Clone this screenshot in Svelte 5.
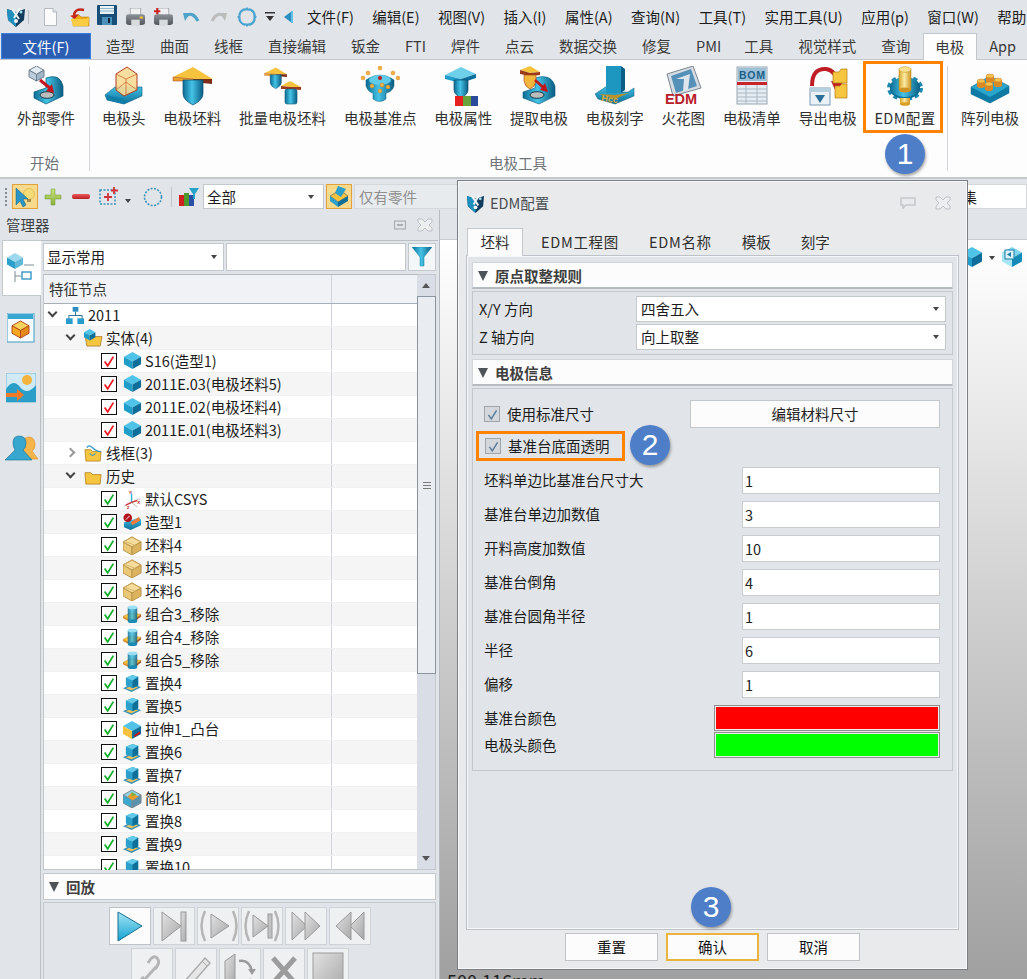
<script>
  const cube = (x, y, s, a, b, c, st = 'none') =>
    `<polygon points="${x},${y + s * 0.28} ${x + s * 0.5},${y} ${x + s},${y + s * 0.28} ${x + s * 0.5},${y + s * 0.56}" fill="${a}" stroke="${st}"/>` +
    `<polygon points="${x},${y + s * 0.28} ${x + s * 0.5},${y + s * 0.56} ${x + s * 0.5},${y + s} ${x},${y + s * 0.72}" fill="${b}" stroke="${st}"/>` +
    `<polygon points="${x + s},${y + s * 0.28} ${x + s * 0.5},${y + s * 0.56} ${x + s * 0.5},${y + s} ${x + s},${y + s * 0.72}" fill="${c}" stroke="${st}"/>`;
  const teal = (x, y, s) => cube(x, y, s, '#4fc3e8', '#1f9cc8', '#0d6f99');
  const shield = (cx, y, w, h) =>
    `<path d="M${cx - w / 2} ${y}H${cx + w / 2}V${y + h * 0.55}Q${cx + w / 2} ${y + h * 0.8} ${cx} ${y + h}Q${cx - w / 2} ${y + h * 0.8} ${cx - w / 2} ${y + h * 0.55}Z" fill="url(#gh)" stroke="#0b4f70" stroke-width=".7"/>`;
  const folder = (o = 0) =>
    `<path d="M${1 + o} 6h6l2 2h9l-1 10H2z" fill="#f6c640" stroke="#b37a16" stroke-width=".8"/>`;
  const check = (c, w = 2) => `<path d="M3 8.500l3.500 5L13 3" fill="none" stroke="${c}" stroke-width="${w}"/>`;
  const topPlate = `<polygon points="1,11 21,1 41,13 21,13" fill="#f6c33f"/><polygon points="1,11 21,13 21,15 1,15" fill="#e9a22c" stroke="#a83a1e" stroke-width=".5"/><polygon points="21,13 41,13 41,18 21,16" fill="#7c2e16"/>`;

  const big = {
    ext: cube(3, 0, 15, '#e4ecf3', '#bccddc', '#a2b6c9', '#6e8091') +
      `<path d="M8 26L20 22V12Q34 7 37 20V30L20 38L8 32Z" fill="url(#gh)" stroke="#0b5a7c" stroke-width=".7"/><ellipse cx="21" cy="29" rx="7" ry="3.300" fill="#bcbcbc" stroke="#1d3b4a"/><path d="M14 14L25 23" stroke="#c3161c" stroke-width="3"/><polygon points="28,27 20,25 26,18" fill="#c3161c"/>`,
    head: `<polygon points="1,29 11,21 38,21 38,30 20,38 3,34" fill="url(#gv)" stroke="#0b5a7c" stroke-width=".6"/><polygon points="3,29 20,33 38,24 20,33 20,38 3,34" fill="#0f7fa8"/><polygon points="12,8 23,1 33,8 33,24 20,30 12,24" fill="#f8dc95" fill-opacity=".9" stroke="#b03c22"/><path d="M12 8L22 13L33 8M22 13V30M12 24L22 16L33 24" fill="none" stroke="#c85a2a" stroke-width=".7"/>`,
    blank: topPlate + shield(21, 14, 20, 25),
    batch: `<g transform="translate(1 1) scale(.56)">${topPlate + shield(21, 14, 20, 25)}</g><g transform="translate(17 14)"><polygon points="1,6 10,1 21,7 10,7" fill="#f6c33f"/><polygon points="1,6 10,7 21,7 21,10 10,9 1,9" fill="#9a3a1a"/><rect x="5" y="9" width="12" height="15" rx="2" fill="url(#gh)" stroke="#0b5a7c" stroke-width=".6"/></g>`,
    datum: `<path d="M6 14Q20 4 34 14V20Q32 26 26 27V33Q20 38 13 33V27Q8 26 6 20Z" fill="url(#gh)" stroke="#0b5a7c" stroke-width=".5"/><ellipse cx="20" cy="14" rx="11" ry="5" fill="#5fcbe8"/>` +
      [[3, 12], [8, 7], [20, 2], [33, 7], [38, 12], [12, 20], [22, 19], [28, 21], [20, 25]].map(([x, y]) => `<circle cx="${x}" cy="${y}" r="2" fill="#f3b23e" stroke="#c97a18" stroke-width=".4"/>`).join('') + `<circle cx="20" cy="12" r="2" fill="#c3161c"/>`,
    attr: `<polygon points="2,9 18,1 33,8 18,13" fill="#6fd0ea"/><polygon points="2,9 18,13 18,17 2,13" fill="#1f9cc8"/><polygon points="18,13 33,8 33,12 18,17" fill="#0d6f99"/>` + shield(18, 14, 14, 18) + `<rect x="12" y="30" width="8" height="10" fill="#e62020"/><rect x="20" y="30" width="8" height="10" fill="#6aa339"/><rect x="28" y="30" width="7" height="10" fill="#2c4a9a"/>`,
    extract: `<path d="M4 26L16 22V12Q32 7 36 20V30L20 38L4 32Z" fill="url(#gh)" stroke="#0b5a7c" stroke-width=".6"/><ellipse cx="18" cy="29" rx="7" ry="3.300" fill="#bcbcbc" stroke="#1d3b4a"/><polygon points="1,4 11,0 21,6 11,7" fill="#f6c33f"/><polygon points="1,4 11,7 21,6 21,9 11,10 1,8" fill="#9a3a1a"/><path d="M5 9H17V15Q16 21 11 23Q6 21 5 15Z" fill="#f2b63c" stroke="#a03c18" stroke-width=".6"/><path d="M16 14L26 23" stroke="#c3161c" stroke-width="2.500"/><polygon points="29,26 21,24 26,17" fill="#c3161c"/>`,
    engrave: `<polygon points="0,28 12,20 12,26 33,26 39,22 39,30 20,38 3,33" fill="url(#gv)" stroke="#0b5a7c" stroke-width=".5"/><rect x="11" y="0" width="15" height="27" fill="#1d96c0"/><polygon points="26,0 30,3 30,24 26,27" fill="#0b5f86"/><polygon points="4,28 20,33 34,27 20,29" fill="#b9922c"/><text x="6" y="35" font-size="9" font-weight="700" fill="#e4a72c" font-family="Liberation Sans" transform="rotate(8 6 35)">Hcc</text>`,
    spark: `<polygon points="4,8 30,0 38,22 10,30" fill="#d6dce2" stroke="#7a8691"/><polygon points="8,10 28,3 34,20 13,27" fill="#5590b8"/><polygon points="13,13 27,8 25,24 20,25 21,13" fill="#dde6ec"/><text x="2" y="38" font-size="14.500" font-weight="700" fill="#b8202a" font-family="Liberation Sans" textLength="32">EDM</text>`,
    bom: `<rect x="5" y="1" width="30" height="37" fill="#e5ecf1" stroke="#9aa8b2"/><rect x="6" y="2" width="28" height="13" fill="#9cc0d8"/><text x="7" y="12.500" font-size="10.500" font-weight="700" fill="#1c5f86" font-family="Liberation Sans" textLength="26">BOM</text><rect x="5" y="16" width="30" height="3" fill="#c8242c"/><path d="M5 23H35M5 27H35M5 31H35M5 35H35M14 19V38M25 19V38" stroke="#a9b8c3" stroke-width="1"/>`,
    export: `<path d="M4 20Q4 2 18 3Q28 4 29 18" fill="none" stroke="#c01c24" stroke-width="4"/><polygon points="23,15 35,16 28,26" fill="#c01c24"/><path d="M25 6h6l2-3h6v14H25z" fill="#f6c640" stroke="#b37a16" stroke-width=".7"/><path d="M27 20h5l2-2h5v14H27z" fill="#f6c640" stroke="#b37a16" stroke-width=".7"/><rect x="2" y="22" width="20" height="17" fill="#eaf1f6" stroke="#7c9ab0"/><rect x="2" y="22" width="20" height="4" fill="#b5cfdf"/><polygon points="7,29 17,29 12,37" fill="#2a6f99"/>`,
    config: `<ellipse cx="20" cy="22" rx="16" ry="11" fill="none" stroke="#1c88b0" stroke-width="4" stroke-dasharray="4.200 3"/><ellipse cx="20" cy="23" rx="15" ry="10" fill="#0f6f98"/><ellipse cx="20" cy="21" rx="15" ry="10" fill="url(#gh)"/><rect x="14" y="3" width="12" height="21" fill="url(#gy)" stroke="#b48a1c" stroke-width=".5"/><ellipse cx="20" cy="3.500" rx="6" ry="2.800" fill="#f8e090" stroke="#b48a1c" stroke-width=".5"/><ellipse cx="20" cy="24" rx="6" ry="2.500" fill="#cf9420"/><rect x="15" y="32" width="10" height="6" fill="url(#gy)"/><ellipse cx="20" cy="38" rx="5" ry="1.800" fill="#d99f22"/>`,
    array: `<polygon points="1,21 20,10 39,20 39,27 20,37 1,28" fill="#2aa5cc" stroke="#0b5a7c" stroke-width=".5"/><polygon points="1,21 20,31 39,20 39,27 20,37 1,28" fill="#0f7ba5"/>` +
      [[11, 18], [20, 13], [28, 17], [19, 21]].map(([x, y]) => `<rect x="${x - 4}" y="${y - 3}" width="8" height="5" fill="#dc8a25"/><ellipse cx="${x}" cy="${y - 3}" rx="4" ry="2" fill="#f7c14d" stroke="#b36a18" stroke-width=".4"/><ellipse cx="${x}" cy="${y + 2}" rx="4" ry="2" fill="#dc8a25"/>`).join('')
  };

  const small = {
    net: `<rect x="7" y="1" width="6" height="5" fill="#2a8fc0"/><path d="M10 6v4M3 14v-4h14v4" fill="none" stroke="#2a6f99"/><rect x="0" y="13" width="7" height="6" fill="#2a9ccb"/><rect x="12" y="13" width="7" height="6" fill="#2a9ccb"/>`,
    solid: `<path d="M1 6h6l2 2h10l-2 10H3z" fill="#f6c640" stroke="#9a6a16" stroke-width=".7"/>` + teal(0, 0, 12),
    cube: teal(1, 0, 18),
    wire: folder() + `<path d="M3 4Q5 0 9 4T18 8M6 10q3 4 6 0" fill="none" stroke="#3498c4" stroke-width="1.300"/>`,
    folder: folder(),
    csys: `<path d="M9 1V13M1 17L9 13L18 9M9 13L15 18" stroke="#c9c9c9" stroke-width="1.200" fill="none"/><path d="M9 4V13" stroke="#31b4d8" stroke-width="1.500"/><path d="M3 16L9 13" stroke="#d23a3a" stroke-width="1.500"/><path d="M9 13L15 11" stroke="#d23a3a" stroke-width="1.500"/><text x="6" y="4" font-size="4.500" fill="#c02020" font-family="Liberation Sans" font-weight="700">Y</text><text x="15" y="15" font-size="4.500" fill="#c02020" font-family="Liberation Sans" font-weight="700">X</text><text x="4" y="20" font-size="4.500" fill="#c02020" font-family="Liberation Sans" font-weight="700">Z</text>`,
    shape: `<polygon points="1,10 17,5 19,7 19,13 8,18 1,15" fill="url(#gv)"/><polygon points="8,10 17,4 18,8 10,13" fill="#f07a3a"/><circle cx="5" cy="5" r="4.500" fill="#b2121a"/><path d="M3 7L7 3" stroke="#fff" stroke-width="1"/>`,
    blank: cube(0, 1, 19, '#f5dc9a', '#e9c877', '#dcb460', '#b8924a') + `<path d="M0 6.300L9.500 1 19 6.300" fill="none" stroke="#caa458"/><path d="M3 6L13 10" stroke="#d8b568"/>`,
    combo: `<polygon points="0,12 8,8 19,10 10,17" fill="#f6c33f" stroke="#c77f20" stroke-width=".5"/><polygon points="0,12 10,17 10,19 0,14" fill="#d98a22"/><polygon points="19,10 10,17 10,19 19,12" fill="#a9511c"/><rect x="5" y="2" width="10" height="15" rx="1" fill="url(#gh)" fill-opacity=".85"/><ellipse cx="10" cy="2.500" rx="5" ry="2" fill="#9be0f2"/><ellipse cx="10" cy="17" rx="5" ry="2" fill="#1c8bb4"/>`,
    swap: `<polygon points="0,15 10,10 19,14 9,19" fill="#3d8fb4"/><polygon points="3,15 10,12 16,14 9,17" fill="#f4c25a"/><polygon points="3,4 10,1 16,3 16,12 10,15 3,12" fill="#2aa0ca"/><polygon points="3,4 10,7 16,3 10,1" fill="#63c9e8"/><polygon points="10,7 16,3 16,12 10,15" fill="#0e6f98"/>`,
    extrude: cube(0, 1, 19, '#4fc3e8', '#f4c23f', '#0d6f99') + `<path d="M12 17l6-4" stroke="#c3161c" stroke-width="2"/>`,
    simp: cube(0, 1, 19, '#8fd1e8', '#3aa9d0', '#5a92ae', '#7d8a90') + `<polygon points="9,4 16,8 10,12 5,8" fill="#e99c2a"/><polygon points="9,3 14,6 9,8" fill="#7fae3a"/>`
  };

  const ui = {
    logo: `<polygon points="1,2 10,5 19,2 18,13 10,20 2,13" fill="#123c5e"/><polygon points="1,2 10,5 10,20 2,13" fill="#1f8fbd"/><path d="M6 2L13 12M14 1L8 11" stroke="#eef3f6" stroke-width="2"/><circle cx="10" cy="14" r="2" fill="#f3f5f7"/><circle cx="15" cy="5" r="1.500" fill="#9fd9ee"/>`,
    file: `<path d="M1.500.5H10L13.500 4V17.500H1.500Z" fill="#fbfbfb" stroke="#b5bac0"/><path d="M10 .5V4H13.500" fill="#e1e3e6" stroke="#b5bac0"/>`,
    open: `<path d="M3 8h6l2 2h8v9H3z" fill="#f3a818" stroke="#b77c10" stroke-width=".6"/><path d="M1 12h15l3-2-1 9H3z" fill="#f9cc44"/><path d="M4 8Q5 1 14 3" fill="none" stroke="#c2241a" stroke-width="2.500"/><polygon points="0,8 9,8 4,12" fill="#c2241a" transform="rotate(-10 4 8)"/>`,
    save: `<rect x="0" y="0" width="20" height="20" rx="1" fill="#174f78"/><rect x="3" y="1" width="14" height="8" fill="#e9f2f7"/><path d="M3 3.500H17M3 6H17" stroke="#8fb6cc"/><rect x="5" y="12" width="10" height="8" fill="#4b90b8"/><rect x="11" y="13" width="2" height="5" fill="#123"/>`,
    print: `<rect x="4" y="0" width="10" height="7" fill="#eef0f2" stroke="#8a8f95" stroke-width=".6"/><path d="M0 8Q0 6 3 6H15Q18 6 18 8V14Q18 16 15 16H3Q0 16 0 14Z" fill="url(#gp)"/><rect x="5" y="11" width="8" height="6" fill="#d8dbde"/><rect x="13" y="8" width="3" height="2" fill="#f3c23a"/>`,
    print2: `<rect x="4" y="0" width="10" height="7" fill="#eef0f2" stroke="#8a8f95" stroke-width=".6"/><path d="M0 8Q0 6 3 6H15Q18 6 18 8V14Q18 16 15 16H3Q0 16 0 14Z" fill="url(#gp)"/><rect x="5" y="11" width="8" height="6" fill="#d8dbde"/><path d="M3 0V6M0 3H6" stroke="#d02020" stroke-width="1.800"/>`,
    undo: `<path d="M3 5Q10 0 15 10" fill="none" stroke="#4ca2c8" stroke-width="3"/><polygon points="0,2 7,2 2,10" fill="#4ca2c8"/>`,
    redo: `<path d="M13 5Q6 0 1 10" fill="none" stroke="#bcbcbc" stroke-width="3"/><polygon points="16,2 9,2 14,10" fill="#bcbcbc"/>`,
    spin: `<circle cx="10" cy="10" r="8" fill="none" stroke="#4aa4cf" stroke-width="2.200" stroke-dasharray="9.500 3.070" stroke-dashoffset="-1.500"/><polygon points="10,0 7,3.500 13,3.500" fill="#4aa4cf"/><polygon points="10,20 7,16.500 13,16.500" fill="#4aa4cf"/><polygon points="0,10 3.500,7 3.500,13" fill="#4aa4cf"/><polygon points="20,10 16.500,7 16.500,13" fill="#4aa4cf"/>`,
    caret: `<path d="M0 0H10V1.500H0Z" fill="#333"/><polygon points="1,4 9,4 5,9" fill="#333"/>`,
    back: `<polygon points="8,0 8,12 0,6" fill="#2b8fc2"/><rect x="7" y="0" width="2" height="12" fill="#62c0e6"/>`,
    select: `<circle cx="16" cy="9" r="5.500" fill="#f6dc76" stroke="#d9a93a" stroke-width=".6"/><rect x="14" y="14" width="4" height="3" fill="#a58c4c"/><polygon points="3,3 3,20 7,16 10,22 13,20 10,14 15,14" fill="#2a95c4" stroke="#125f84" stroke-width=".5"/>`,
    plus: `<path d="M7 1H11V7H17V11H11V17H7V11H1V7H7Z" fill="url(#gl)" stroke="#6e9a30" stroke-width=".5"/>`,
    minus: `<rect x="0" y="6" width="18" height="5" rx="2" fill="url(#gm)"/>`,
    boxplus: `<rect x="1" y="3" width="15" height="14" fill="none" stroke="#3d92bb" stroke-width="1.500" stroke-dasharray="2 1.500"/><path d="M9 6V14M5 10H13" stroke="#d0343a" stroke-width="1.800"/><path d="M15 0V7M12 3.500H19" stroke="#d0343a" stroke-width="1.800"/>`,
    circ: `<circle cx="10" cy="10" r="8.500" fill="none" stroke="#3d92bb" stroke-width="1.600" stroke-dasharray="2 1.400"/>`,
    chart: `<rect x="0" y="8" width="5" height="11" fill="#d02020"/><rect x="5" y="6" width="5" height="13" fill="#4d9a2c"/><rect x="10" y="8" width="5" height="11" fill="#2a4fa8"/><polygon points="10,1 20,1 16,7 16,12 14,12 14,7" fill="#27a2c9"/>`,
    cuber: `<polygon points="3,11 13,5 21,11 11,17" fill="#f4c23f" stroke="#555" stroke-width=".6"/><polygon points="3,11 11,17 11,22 3,16" fill="#2aa0ca"/><polygon points="21,11 11,17 11,22 21,16" fill="#0e6f98"/><polygon points="11,1 19,4 14,12 8,8" fill="#2aa0ca"/>`,
    tree: cube(0, 0, 16, '#9fd9ee', '#2aa0ca', '#62b8d8') + `<path d="M17 12H27M8 18V29M8 23H14" stroke="#7c8b96" stroke-width="1" fill="none"/><rect x="15" y="19" width="9" height="7" fill="#fff" stroke="#2a8fbd" stroke-width="1.300"/>`,
    part: `<rect x="0" y="0" width="27" height="29" fill="#f8fbfd" stroke="#3d9cc4"/><rect x="1" y="1" width="25" height="5" fill="#39a6cf"/>` + cube(5, 8, 17, '#fad35c', '#f6a821', '#e68a1a', '#b84c1c'),
    pic: `<rect x="0" y="0" width="30" height="29" fill="#cfeaf5" stroke="#72b6d1"/><path d="M0 16Q7 5 14 14T30 12V29H0Z" fill="#2a9ec8"/><circle cx="21" cy="7" r="5" fill="#f4b23e"/><path d="M0 20H11V16L18 22L11 28V24H0Z" fill="#f1792a"/>`,
    person: `<path d="M18 9Q18 2 24 2Q30 2 30 10Q30 14 27 16L33 24H18Z" fill="#f5b54a" stroke="#d88a20" stroke-width=".6"/><path d="M8 8Q8 1 14 1Q21 1 21 8Q21 13 18 15L27 25H0L10 15Q8 12 8 8Z" fill="#37a7cf" stroke="#116f98" stroke-width=".6"/>`,
    funnel: `<polygon points="0,0 20,0 12,10 12,19 8,19 8,10" fill="url(#gh)" stroke="#1589ae" stroke-width=".5"/>`,
    pin: `<path d="M1 1H15V8H6L3 11V8H1Z" fill="none" stroke="#c5c9cc" stroke-width="1.600"/>`,
    close: `<path d="M1 1H5L8 4L11 1H15V4L12 7L15 10V13H11L8 10L5 13H1V10L4 7L1 4Z" fill="#eceef0" stroke="#bcc1c6" stroke-width="1"/>`,
    mini: `<rect x="0.500" y="2" width="11" height="8" fill="none" stroke="#a9aeb3" stroke-width="1.200"/><rect x="3" y="5" width="6" height="2" fill="#a9aeb3"/>`
  };

  const play = {
    play: `<polygon points="9,7 9,36 33,21" fill="url(#gv2)" stroke="#1c6f90" stroke-width="1"/>`,
    step: `<polygon points="9,7 9,36 28,21" fill="url(#gg)" stroke="#999"/><rect x="28" y="7" width="5" height="29" fill="url(#gg)" stroke="#999"/>`,
    pp: `<polygon points="14,9 14,33 32,21" fill="url(#gg)" stroke="#999"/><path d="M8 6Q1 21 8 36M36 6Q43 21 36 36" fill="none" stroke="#b5b5b5" stroke-width="2.500"/>`,
    ps: `<polygon points="12,10 12,32 27,21" fill="url(#gg)" stroke="#999"/><rect x="27" y="9" width="4" height="24" fill="#c2c2c2" stroke="#999"/><path d="M8 6Q1 21 8 36M34 6Q41 21 34 36" fill="none" stroke="#b5b5b5" stroke-width="2.500"/>`,
    ff: `<polygon points="7,7 7,35 22,21" fill="url(#gg)" stroke="#999"/><polygon points="20,7 20,35 35,21" fill="url(#gg)" stroke="#999"/>`,
    rw: `<polygon points="35,7 35,35 21,21" fill="url(#gg)" stroke="#999"/><polygon points="22,7 22,35 7,21" fill="url(#gg)" stroke="#999"/>`,
    link: `<path d="M13 28Q6 34 11 38T21 33M24 20Q30 13 26 9T17 14" fill="none" stroke="#b5b5b5" stroke-width="3"/><path d="M14 30L25 18" stroke="#b5b5b5" stroke-width="3"/>`,
    pen: `<path d="M9 33L30 9L35 14L14 38L8 40Z" fill="#e6e6e6" stroke="#aaa" stroke-width="1.400"/><path d="M27 12L32 17" stroke="#aaa"/>`,
    flip: `<polygon points="6,12 16,5 16,34 6,38" fill="url(#gg)" stroke="#999"/><polygon points="16,34 32,30 38,38 22,42" fill="#e6e6e6" stroke="#999"/><path d="M20 12Q30 10 33 22" fill="none" stroke="#9a9a9a" stroke-width="2.500"/><polygon points="29,20 37,20 33,26" fill="#9a9a9a"/>`,
    del: `<path d="M10 9L32 34M32 9L10 34" stroke="#9c9c9c" stroke-width="5"/>`,
    stop: `<rect x="6" y="4" width="30" height="38" fill="url(#gg)" stroke="#9c9c9c"/>`
  };

  const menus = ['文件(F)', '编辑(E)', '视图(V)', '插入(I)', '属性(A)', '查询(N)', '工具(T)', '实用工具(U)', '应用(p)', '窗口(W)', '帮助'];
  const tabs = ['造型', '曲面', '线框', '直接编辑', '钣金', 'FTI', '焊件', '点云', '数据交换', '修复', 'PMI', '工具', '视觉样式', '查询', '电极', 'App'];
  const ribbon = [
    ['head', '电极头'], ['blank', '电极坯料'], ['batch', '批量电极坯料'], ['datum', '电极基准点'], ['attr', '电极属性'],
    ['extract', '提取电极'], ['engrave', '电极刻字'], ['spark', '火花图'], ['bom', '电极清单'], ['export', '导出电极']
  ];
  const h = { mark: 'green' };
  const tree = [
    { lv: 0, arrow: 'd', ic: 'net', t: '2011' },
    { lv: 1, arrow: 'd', ic: 'solid', t: '实体(4)' },
    { lv: 2, mark: 'red', ic: 'cube', t: 'S16(造型1)' },
    { lv: 2, mark: 'red', ic: 'cube', t: '2011E.03(电极坯料5)' },
    { lv: 2, mark: 'red', ic: 'cube', t: '2011E.02(电极坯料4)' },
    { lv: 2, mark: 'red', ic: 'cube', t: '2011E.01(电极坯料3)' },
    { lv: 1, arrow: 'r', ic: 'wire', t: '线框(3)' },
    { lv: 1, arrow: 'd', ic: 'folder', t: '历史' },
    { lv: 2, ...h, ic: 'csys', t: '默认CSYS' },
    { lv: 2, ...h, ic: 'shape', t: '造型1' },
    { lv: 2, ...h, ic: 'blank', t: '坯料4' },
    { lv: 2, ...h, ic: 'blank', t: '坯料5' },
    { lv: 2, ...h, ic: 'blank', t: '坯料6' },
    { lv: 2, ...h, ic: 'combo', t: '组合3_移除' },
    { lv: 2, ...h, ic: 'combo', t: '组合4_移除' },
    { lv: 2, ...h, ic: 'combo', t: '组合5_移除' },
    { lv: 2, ...h, ic: 'swap', t: '置换4' },
    { lv: 2, ...h, ic: 'swap', t: '置换5' },
    { lv: 2, ...h, ic: 'extrude', t: '拉伸1_凸台' },
    { lv: 2, ...h, ic: 'swap', t: '置换6' },
    { lv: 2, ...h, ic: 'swap', t: '置换7' },
    { lv: 2, ...h, ic: 'simp', t: '简化1' },
    { lv: 2, ...h, ic: 'swap', t: '置换8' },
    { lv: 2, ...h, ic: 'swap', t: '置换9' },
    { lv: 2, ...h, ic: 'swap', t: '置换10' }
  ];
  const sizes = [['坯料单边比基准台尺寸大', '1'], ['基准台单边加数值', '3'], ['开料高度加数值', '10'], ['基准台倒角', '4'], ['基准台圆角半径', '1'], ['半径', '6'], ['偏移', '1']];
  const dtabs = ['坯料', 'EDM工程图', 'EDM名称', '模板', '刻字'];
</script>

{#snippet svg(body, w, hh, vw, vh)}
  <svg width={w} height={hh} viewBox="0 0 {vw} {vh}" class="ico">{@html body}</svg>
{/snippet}

{#snippet drop()}
  <span class="drop"></span>
{/snippet}

{#snippet tri()}
  <span class="tri"></span>
{/snippet}

<div class="app">
  <svg class="defs" width="0" height="0" aria-hidden="true">
    <defs>
      <linearGradient id="gh" x1="0" x2="1" y1="0" y2="0"><stop offset="0" stop-color="#0c6b94"/><stop offset=".45" stop-color="#45c3e6"/><stop offset="1" stop-color="#0a5c82"/></linearGradient>
      <linearGradient id="gv" x1="0" x2="0" y1="0" y2="1"><stop offset="0" stop-color="#42bfe4"/><stop offset="1" stop-color="#0c6f99"/></linearGradient>
      <linearGradient id="gv2" x1="0" x2="0" y1="0" y2="1"><stop offset="0" stop-color="#a4e6f6"/><stop offset="1" stop-color="#15a2d2"/></linearGradient>
      <linearGradient id="gy" x1="0" x2="1" y1="0" y2="0"><stop offset="0" stop-color="#d9a425"/><stop offset=".45" stop-color="#fbeaa5"/><stop offset="1" stop-color="#cf9420"/></linearGradient>
      <linearGradient id="gp" x1="0" x2="0" y1="0" y2="1"><stop offset="0" stop-color="#8b9197"/><stop offset="1" stop-color="#52585e"/></linearGradient>
      <linearGradient id="gl" x1="0" x2="0" y1="0" y2="1"><stop offset="0" stop-color="#c6e078"/><stop offset="1" stop-color="#8db23e"/></linearGradient>
      <linearGradient id="gm" x1="0" x2="0" y1="0" y2="1"><stop offset="0" stop-color="#ee5a5a"/><stop offset="1" stop-color="#b81f24"/></linearGradient>
      <linearGradient id="gg" x1="0" x2="1" y1="0" y2="1"><stop offset="0" stop-color="#e2e2e2"/><stop offset="1" stop-color="#a8a8a8"/></linearGradient>
    </defs>
  </svg>

  <header class="qat">
    <div class="qat-icons">
      <span class="q logo">{@render svg(ui.logo, 20, 20, 20, 20)}</span>
      <span class="q qsep"></span>
      <span class="q new">{@render svg(ui.file, 15, 18, 15, 18)}</span>
      <span class="q open">{@render svg(ui.open, 20, 20, 20, 20)}</span>
      <span class="q save">{@render svg(ui.save, 20, 20, 20, 20)}</span>
      <span class="q prn">{@render svg(ui.print, 19, 18, 18, 17)}</span>
      <span class="q prn2">{@render svg(ui.print2, 19, 18, 18, 17)}</span>
      <span class="q und">{@render svg(ui.undo, 17, 12, 17, 12)}</span>
      <span class="q red">{@render svg(ui.redo, 17, 12, 17, 12)}</span>
      <span class="q spin">{@render svg(ui.spin, 20, 20, 20, 20)}</span>
      <span class="q car">{@render svg(ui.caret, 10, 9, 10, 9)}</span>
      <span class="q bak">{@render svg(ui.back, 9, 12, 9, 12)}</span>
    </div>
    <nav class="menu">
      {#each menus as m}<span>{m}</span>{/each}
    </nav>
  </header>

  <div class="tabs">
    <span class="filetab">文件(F)</span>
    {#each tabs as t}
      <span class="tab" class:active={t === '电极'} class:tight={t === 'PMI'}>{t}</span>
    {/each}
  </div>

  <section class="ribbon">
    <div class="group g1">
      <div class="items">
        <div class="item">{@render svg(big.ext, 40, 40, 40, 40)}<span>外部零件</span></div>
      </div>
      <div class="gname">开始</div>
    </div>
    <div class="group g2">
      <div class="items">
        {#each ribbon as [ic, label]}
          <div class="item">{@render svg(big[ic], 40, 40, 40, 40)}<span>{label}</span></div>
        {/each}
        <div class="item edm">{@render svg(big.config, 40, 40, 40, 40)}<span>EDM配置</span></div>
      </div>
      <div class="gname">电极工具</div>
    </div>
    <div class="group g3">
      <div class="items">
        <div class="item">{@render svg(big.array, 40, 40, 40, 40)}<span>阵列电极</span></div>
      </div>
    </div>
  </section>

  <div class="toolbar">
    <span class="grip"></span>
    <span class="tbtn on">{@render svg(ui.select, 24, 24, 24, 24)}</span>
    <span class="tic plus">{@render svg(ui.plus, 18, 18, 18, 18)}</span>
    <span class="tic minus">{@render svg(ui.minus, 18, 18, 18, 18)}</span>
    <span class="tic bplus">{@render svg(ui.boxplus, 20, 20, 20, 20)}</span>
    <span class="tcar">{@render drop()}</span>
    <span class="tic circ">{@render svg(ui.circ, 20, 20, 20, 20)}</span>
    <span class="tsep"></span>
    <span class="tic">{@render svg(ui.chart, 20, 20, 20, 20)}</span>
    <div class="combo all"><span>全部</span>{@render drop()}</div>
    <span class="tbtn on cube">{@render svg(ui.cuber, 24, 24, 24, 24)}</span>
    <div class="tinput">仅有零件</div>
    <div class="tinput2">选择集</div>
  </div>

  <div class="main">
    <aside class="manager">
      <div class="mhead">
        <span class="mtitle">管理器</span>
        <span class="mbtn">{@render svg(ui.mini, 12, 12, 12, 12)}</span>
        <span class="mbtn">{@render svg(ui.close, 16, 14, 16, 14)}</span>
      </div>
      <div class="mbody">
        <div class="strip">
          <div class="stab sel">{@render svg(ui.tree, 28, 30, 28, 30)}</div>
          <div class="stab s2">{@render svg(ui.part, 28, 30, 28, 30)}</div>
          <div class="stab s3">{@render svg(ui.pic, 30, 30, 30, 30)}</div>
          <div class="stab s4">{@render svg(ui.person, 33, 26, 33, 26)}</div>
        </div>
        <div class="panel">
          <div class="filter">
            <div class="combo show"><span>显示常用</span>{@render drop()}</div>
            <div class="search"></div>
            <div class="fbtn">{@render svg(ui.funnel, 20, 20, 20, 20)}</div>
          </div>
          <div class="grid">
            <div class="gridmain">
              <div class="ghead"><div class="c1">特征节点</div><div class="c2"></div></div>
              <div class="rows">
                {#each tree as r, i}
                  <div class="row lv{r.lv}" class:odd={i % 2 === 1}>
                    <div class="c1">
                      {#if r.arrow}<span class="arrow {r.arrow}"></span>{/if}
                      {#if r.mark}<span class="mark">{@render svg(check(r.mark === 'red' ? '#ef1c24' : '#12b02a'), 14, 14, 16, 16)}</span>{/if}
                      <span class="ricon">{@render svg(small[r.ic], 19, 19, 20, 20)}</span>
                      <span class="rt">{r.t}</span>
                    </div>
                    <div class="c2"></div>
                  </div>
                {/each}
              </div>
            </div>
            <div class="sbar">
              <span class="sup"></span>
              <div class="thumb"><i></i></div>
              <span class="sdn"></span>
            </div>
          </div>
          <div class="phead">{@render tri()}<b>回放</b></div>
          <div class="pbody">
            <div class="prow">
              {#each ['play', 'step', 'pp', 'ps', 'ff', 'rw'] as p, i}
                <span class="pbtn" class:first={i === 0}>{@render svg(play[p], 42, 42, 42, 42)}</span>
              {/each}
            </div>
            <div class="prow">
              {#each ['link', 'pen', 'flip', 'del', 'stop'] as p}
                <span class="pbtn tall">{@render svg(play[p], 42, 42, 42, 42)}</span>
              {/each}
            </div>
          </div>
        </div>
      </div>
    </aside>

    <div class="view">
      <div class="vtop"></div>
      <div class="canvas">
        <div class="vicons">
          {@render svg(teal(0, 0, 20), 20, 20, 20, 20)}
          <span class="vcar">{@render drop()}</span>
          {@render svg(cube(0, 0, 20, '#7fd4ee', '#a9e4f5', '#148bb8') + '<rect x="3" y="3" width="9" height="9" fill="#dff3fa" stroke="#1c7fa8"/><polygon points="9,5 9,10 5,7.500" fill="#1c7fa8"/>', 20, 20, 20, 20)}
        </div>
        <div class="measure">500.116mm</div>
      </div>
    </div>
  </div>

  <div class="dlg">
    <div class="dtitle">
      {@render svg(ui.logo, 19, 19, 20, 20)}
      <span class="dname">EDM配置</span>
      <span class="dpin">{@render svg(ui.pin, 16, 12, 16, 12)}</span>
      <span class="dx">{@render svg(ui.close, 16, 14, 16, 14)}</span>
    </div>
    <div class="dtabs">
      {#each dtabs as t, i}<span class="dtab" class:sel={i === 0} class:latin={t.startsWith('EDM')}>{t}</span>{/each}
    </div>
    <div class="dpanel">
      <div class="shead">{@render tri()}<b>原点取整规则</b></div>
      <div class="sbody rules">
        <div class="frow"><label>X/Y 方向</label><div class="combo wide"><span>四舍五入</span>{@render drop()}</div></div>
        <div class="frow"><label>Z 轴方向</label><div class="combo wide"><span>向上取整</span>{@render drop()}</div></div>
      </div>
      <div class="shead second">{@render tri()}<b>电极信息</b></div>
      <div class="sbody info">
        <div class="chkrow">
          <div class="chk"><span class="box">{@render svg(check('#5a7a9a', 1.800), 13, 13, 16, 16)}</span><span>使用标准尺寸</span></div>
          <button class="edit">编辑材料尺寸</button>
        </div>
        <div class="chkrow second-chk">
          <div class="chk hl"><span class="box">{@render svg(check('#5a7a9a', 1.800), 13, 13, 16, 16)}</span><span>基准台底面透明</span></div>
          <span class="badge b2">2</span>
        </div>
        {#each sizes as [l, v]}
          <div class="irow"><label>{l}</label><div class="val">{v}</div></div>
        {/each}
        <div class="crow one"><label>基准台颜色</label><div class="swatch r"></div></div>
        <div class="crow"><label>电极头颜色</label><div class="swatch g"></div></div>
      </div>
    </div>
    <div class="dfoot">
      <button>重置</button>
      <button class="primary">确认</button>
      <button>取消</button>
    </div>
  </div>

  <span class="edmbox"></span>
  <span class="badge b1">1</span>
  <span class="badge b3">3</span>
</div>

<style>
  :global(body) { margin: 0; background: #e1e5e9; }
  .app {
    position: relative; width: 1027px; height: 979px; overflow: hidden;
    display: flex; flex-direction: column; background: #e1e5e9; color: #1c1c1c;
    font: 14.5px/20px "Noto Sans CJK SC", "Noto Sans", sans-serif;
  }
  .defs { position: absolute; }
  .ico { display: block; flex: none; }

  .qat { height: 33px; display: flex; flex: none; align-items: center; }
  .qat-icons { width: 307px; flex: none; display: flex; align-items: center; }
  .q { display: block; flex: none; }
  .logo { margin-left: 6px; }
  .qsep { width: 1px; height: 14px; margin-left: 2px; background: #b9bec4; }
  .new { margin-left: 14px; }
  .open { margin-left: 12px; }
  .save { margin-left: 7px; margin-top: -3px; }
  .prn { margin-left: 9px; }
  .prn2 { margin-left: 9px; }
  .und { margin-left: 10px; }
  .red { margin-left: 11px; }
  .spin { margin-left: 9px; }
  .car { margin-left: 8px; }
  .bak { margin-left: 9px; }
  .menu { display: flex; white-space: nowrap; }
  .menu span { margin-right: 18.400px; }

  .tabs { height: 27px; flex: none; display: flex; align-items: stretch; border-bottom: 1px solid #c2c7cc; box-sizing: border-box; }
  .filetab {
    width: 90px; margin-left: 1px; margin-right: 2.500px; flex: none; box-sizing: border-box; text-align: center; line-height: 25px;
    background: #2c5fb3; border: 1px solid #3f7fdc; color: #fff;
  }
  .tab { padding: 0 12.500px; line-height: 26px; color: #3a3a3a; white-space: nowrap; }
  .tab.tight { padding-right: 10.500px; }
  .tab.active { background: #fdfdfd; border: 1px solid #c2c7cc; border-bottom: 0; padding: 0 11.500px; margin-bottom: -1px; position: relative; }

  .ribbon { height: 119px; flex: none; display: flex; background: #fdfdfd; border-bottom: 2px solid #c4c9ce; box-sizing: border-box; }
  .group { position: relative; display: flex; flex-direction: column; box-sizing: border-box; margin: 6px 0; padding-top: 0; }
  .g1 { width: 90px; padding-left: 17px; border-right: 1px solid #d4d7da; }
  .g2 { width: 858px; padding-left: 12px; border-right: 1px solid #d4d7da; }
  .g3 { padding-left: 13px; }
  .items { display: flex; gap: 17.800px; height: 93px; }
  .item { display: flex; flex-direction: column; align-items: center; white-space: nowrap; color: #303030; }
  .item span { margin-top: 2px; }
  .edm span { letter-spacing: .35px; }
  .gname { text-align: center; color: #6f7478; height: 18px; }
  .g1 .gname { margin-left: -17px; }
  .g2 .gname { margin-left: -12px; padding-right: 1px; }

  .toolbar { height: 30px; box-sizing: border-box; padding-top: 3px; flex: none; display: flex; align-items: center; margin-top: 1px; position: relative; }
  .grip { width: 2px; height: 18px; margin: 0 5px; background: repeating-linear-gradient(#7e8a96 0 2px, transparent 2px 4px); }
  .tbtn { width: 26px; height: 25px; box-sizing: border-box; flex: none; display: flex; align-items: center; justify-content: center; }
  .tbtn.on { background: #f9d98b; border: 1px solid #e0a33c; }
  .tbtn.cube { margin-left: 2px; }
  .tic { flex: none; margin-left: 5px; }
  .plus { margin-left: 6px; }
  .minus { margin-left: 10px; }
  .bplus { margin-left: 9px; }
  .tcar { margin-left: 6px; width: 10px; }
  .circ { margin-left: 8px; }
  .tsep { width: 1px; height: 20px; margin-left: 8px; background: #c2c7cc; }
  .tsep + .tic { margin-left: 7px; }
  .drop { display: inline-block; width: 0; height: 0; border: 3.500px solid transparent; border-top: 4.500px solid #444; border-bottom: 0; flex: none; }
  .combo { box-sizing: border-box; display: flex; align-items: center; justify-content: space-between; background: #fff; border: 1px solid #c3c8cd; padding: 0 9px 0 3px; }
  .combo.all { width: 121px; height: 25px; margin-left: 4px; }
  .tinput { width: 105px; height: 25px; box-sizing: border-box; margin-left: 2px; padding-left: 4px; line-height: 23px; background: #e8ebee; border: 1px solid #d6d9dc; color: #8f8f8f; flex: none; }
  .tinput2 { flex: 1; height: 25px; box-sizing: border-box; background: #fff; border: 1px solid #d6d9dc; line-height: 23px; text-align: right; padding-right: 49px; }

  .main { flex: 1; min-height: 0; display: flex; }
  .manager { width: 440px; flex: none; box-sizing: border-box; border-right: 1px solid #b5bbc1; }
  .mhead { height: 30px; display: flex; align-items: center; }
  .mtitle { margin-left: 6px; flex: 1; color: #3d4146; }
  .mbtn { margin-right: 7px; }
  .mbtn + .mbtn { margin-left: 4px; margin-right: 6px; }
  .mbody { display: flex; height: 739px; }
  .strip { width: 38px; margin-left: 2px; flex: none; position: relative; }
  .stab { display: flex; justify-content: center; }
  .stab.sel { height: 56px; box-sizing: border-box; padding-top: 12px; padding-right: 2px; background: #fff; border: 1px solid #c3c8cd; border-right: 0; position: relative; margin-right: -1px; }
  .s2 { margin-top: 17px; } .s3 { margin-top: 30px; } .s4 { margin-top: 32px; }
  .panel { width: 398px; box-sizing: border-box; border-left: 1px solid #b9bfc5; border-top: 1px solid #b9bfc5; padding: 2px 2px 0 2px; }
  .filter { display: flex; gap: 2px; height: 28px; }
  .combo.show { width: 181px; padding: 0 6px 0 3px; }
  .search { width: 180px; background: #fff; border: 1px solid #c3c8cd; box-sizing: border-box; }
  .fbtn { flex: 1; background: #f4f6f7; border: 1px solid #c3c8cd; display: flex; align-items: center; justify-content: center; }
  .grid { margin-top: 3px; display: flex; height: 596px; border: 1px solid #c3c8cd; border-top: 0; box-sizing: border-box; }
  .gridmain { width: 373px; flex: none; background: #fff; }
  .ghead { height: 30px; display: flex; background: #f1f2f5; border-top: 1px solid #b5bbc1; border-bottom: 1px solid #a9afb6; box-sizing: border-box; line-height: 28px; }
  .ghead .c1 { padding-left: 5px; color: #333; }
  .c1 { width: 287px; flex: none; display: flex; align-items: center; box-sizing: border-box; }
  .c2 { flex: 1; border-left: 1px solid #d2d2e0; }
  .rows { height: 566px; overflow: hidden; }
  .row { height: 23px; display: flex; border-bottom: 1px solid #f1f1f1; box-sizing: border-box; }
  .row.odd { background: #f5f5f5; }
  .row .c1 { white-space: nowrap; position: relative; }
  .lv0 .c1 { padding-left: 22px; }
  .lv1 .c1 { padding-left: 40px; }
  .lv2 .c1 { padding-left: 57px; }
  .ricon { display: block; margin-right: 3px; }
  .arrow { position: absolute; width: 7px; height: 7px; border: solid #444; border-width: 0 2px 2px 0; box-sizing: border-box; }
  .arrow.d { transform: rotate(45deg); top: 5px; }
  .arrow.r { transform: rotate(-45deg); top: 7px; border-color: #9a9a9a; }
  .lv0 .arrow { left: 5px; }
  .lv1 .arrow { left: 23px; }
  .mark { width: 16px; height: 16px; box-sizing: border-box; border: 1px solid #111; background: #fff; display: flex; align-items: center; justify-content: center; margin-right: 6px; flex: none; }
  .sbar { flex: 1; background: #d9dde6; position: relative; border-top: 1px solid #c3c8cd; }
  .sup { position: absolute; left: 5px; top: 8px; width: 0; height: 0; border: 4.500px solid transparent; border-bottom: 5px solid #555; border-top: 0; }
  .sdn { position: absolute; left: 5px; bottom: 8px; width: 0; height: 0; border: 4.500px solid transparent; border-top: 5px solid #555; border-bottom: 0; }
  .thumb { position: absolute; left: 0; top: 21px; width: 19px; height: 378px; background: #e9ecf1; border: 1px solid #8b959f; box-sizing: border-box; display: flex; align-items: center; justify-content: center; }
  .thumb i { width: 8px; height: 7px; background: repeating-linear-gradient(#7a7a7a 0 1px, transparent 1px 3px); }
  .phead { margin-top: 3px; height: 27px; box-sizing: border-box; display: flex; align-items: center; background: #fcfcfc; border: 1px solid #c3c8cd; color: #404040; }
  .tri { width: 0; height: 0; border: 5.500px solid transparent; border-top: 10px solid #4f5358; border-bottom: 0; margin: 0 7px 0 5px; flex: none; }
  .pbody { margin-top: 2px; height: 120px; box-sizing: border-box; border: 1px solid #c3c8cd; padding-top: 4px; }
  .prow { display: flex; justify-content: center; gap: 2px; margin-bottom: 3px; }
  .pbtn { width: 42px; height: 38px; overflow: hidden; box-sizing: border-box; background: #eff0f1; border: 1px solid #cfd3d7; display: flex; align-items: center; justify-content: center; }
  .pbtn.first { background: #fcfcfc; border-color: #bdc3c9; }
  .pbtn.tall { height: 44px; }

  .view { flex: 1; min-width: 0; display: flex; flex-direction: column; }
  .vtop { height: 30px; flex: none; border-bottom: 1px solid #c9cdd1; box-sizing: border-box; }
  .canvas { flex: 1; background: linear-gradient(#fff, #a0a0a0); position: relative; overflow: hidden; display: flex; flex-direction: column; justify-content: space-between; }
  .vicons { display: flex; align-items: center; justify-content: flex-end; margin: 7px 5px 0 0; }
  .vcar { margin: 0 7px; display: block; line-height: 0; }
  .measure { font-size: 18px; line-height: 18px; margin: 0 0 -10px 7px; color: #222; }

  .dlg { position: absolute; left: 457px; top: 180px; width: 511px; height: 790px; box-sizing: border-box; background: #e8eaec; border: 1px solid #7b7e82; box-shadow: inset 0 0 0 1px #f7f8f9; display: flex; flex-direction: column; }
  .dtitle { height: 44px; flex: none; display: flex; align-items: center; padding: 0 16px 0 8px; }
  .dname { flex: 1; margin-left: 5px; color: #4a4d50; }
  .dpin { margin-right: 19px; }
  .dtabs { display: flex; height: 30px; flex: none; padding-left: 9px; position: relative; align-items: flex-end; }
  .dtab { padding: 0 0 1px; margin-right: 30px; line-height: 25px; white-space: nowrap; color: #303030; }
  .dtab.latin { letter-spacing: .7px; }
  .dtab.sel { width: 56px; box-sizing: border-box; text-align: center; margin-right: 18px; background: #fcfcfd; border: 1px solid #c3c8cd; border-bottom: 0; height: 28px; margin-bottom: -1px; position: relative; }
  .dpanel { width: 493px; height: 675px; margin-left: 8px; flex: none; box-sizing: border-box; background: #e1e5e9; border: 1px solid #bcc2c7; box-shadow: inset 0 0 0 1px #f6f7f8; padding: 6px 5px 0; }
  .shead { height: 27px; box-sizing: border-box; display: flex; align-items: center; padding-top: 1px; background: #fcfcfc; border: 1px solid #d2d6da; border-bottom: 2px solid #b5bbc1; color: #404040; }
  .shead.second { margin-top: 4px; }
  .shead .tri { margin: 0 7px 0 5px; }
  .sbody { margin-top: 2px; border: 1px solid #c3c8cd; box-sizing: border-box; }
  .rules { height: 64px; padding: 4px 6px 0 6px; }
  .frow { display: flex; justify-content: space-between; align-items: center; height: 26px; margin-bottom: 2px; }
  .combo.wide { width: 310px; height: 26px; padding: 0 6px 0 4px; }
  .info { height: 383px; padding: 0 12px 0 11px; position: relative; }
  .chkrow { display: flex; align-items: center; justify-content: space-between; height: 28px; margin-top: 11px; }
  .second-chk { justify-content: flex-start; height: 30px; margin-top: 3px; margin-bottom: 5px; margin-left: -8px; }
  .chk { display: flex; align-items: center; gap: 7px; }
  .box { width: 16px; height: 16px; box-sizing: border-box; border: 1px solid #a0a5aa; background: #d4d8dc; display: flex; align-items: center; justify-content: center; flex: none; }
  .hl { width: 149px; height: 30px; box-sizing: border-box; border: 3px solid #ff8300; padding-left: 6px; white-space: nowrap; }
  .edit { width: 250px; height: 28px; background: #fcfcfc; border: 1px solid #c3c8cd; padding: 0; font: inherit; color: #222; }
  .irow, .crow { display: flex; align-items: center; justify-content: space-between; height: 28px; margin-bottom: 6px; }
  .val { width: 198px; height: 27px; box-sizing: border-box; background: #fff; border: 1px solid #c9cdd1; padding-left: 2px; line-height: 25px; color: #222; }
  .crow { height: 27px; margin-bottom: 0; }
  .swatch { width: 226px; height: 26px; box-sizing: border-box; border: 1px solid #8f8f8f; box-shadow: inset 0 0 0 1px #eee; }
  .swatch.r { background: #ff0000; }
  .swatch.g { background: #00ff00; }
  .dfoot { display: flex; justify-content: center; gap: 8px; margin-top: 3px; }
  .dfoot button { width: 93px; height: 28px; padding: 0; background: #fcfcfd; border: 1px solid #c0c4c8; font: inherit; color: #111; }
  .dfoot .primary { border: 2px solid #eab43e; }

  .badge { position: absolute; width: 40px; height: 40px; border-radius: 50%; background: #4f7ec9; color: #fff; text-align: center; font: 30px/40px "Liberation Sans", sans-serif; box-shadow: 1px 2px 3px rgba(60, 60, 60, .45); }
  .b1 { left: 885px; top: 134px; }
  .b2 { position: static; flex: none; margin-left: 5px; margin-top: -2px; }
  .b3 { left: 691px; top: 887px; }
  .edmbox { position: absolute; left: 863px; top: 61px; width: 80px; height: 72px; box-sizing: border-box; border: 3px solid #ff8300; }
</style>
